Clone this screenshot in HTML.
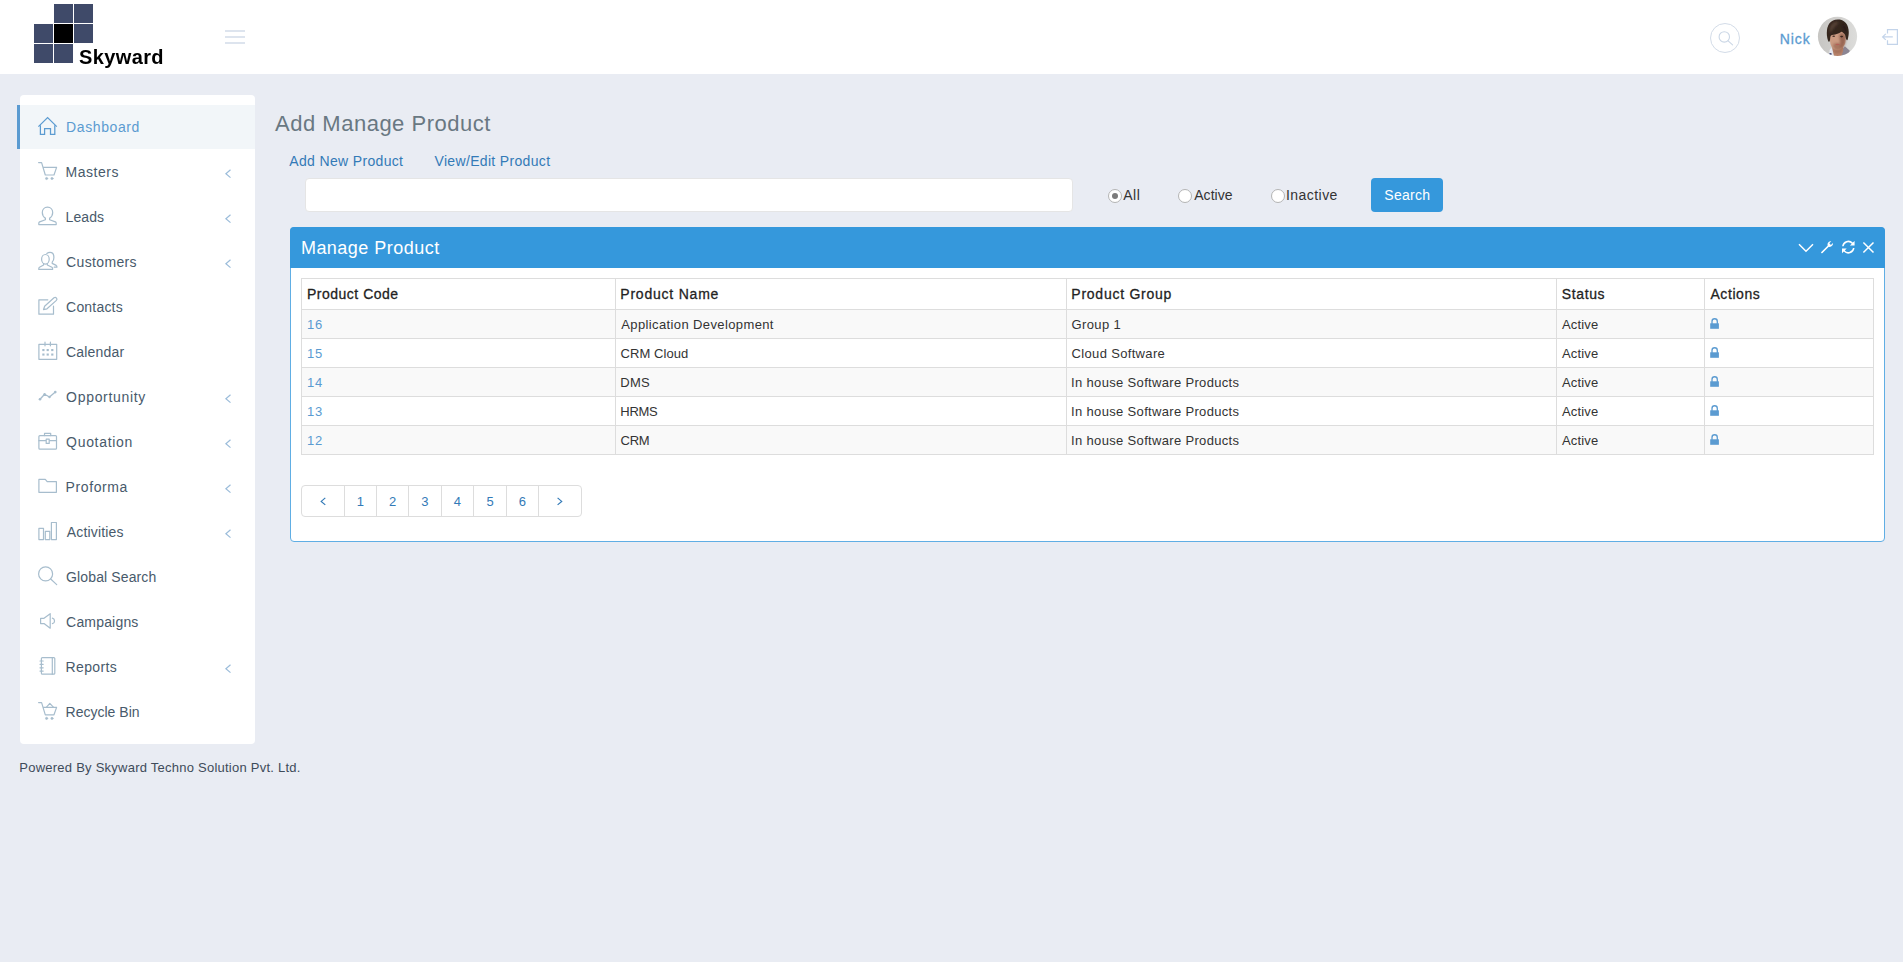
<!DOCTYPE html>
<html lang="en">
<head>
<meta charset="utf-8">
<title>Add Manage Product</title>
<style>
*{box-sizing:border-box;margin:0;padding:0}
html,body{width:1903px;height:962px;overflow:hidden}
body{background:#e9ecf3;font-family:"Liberation Sans","DejaVu Sans",sans-serif;font-size:14px;color:#333;position:relative}
a{text-decoration:none}
.tx{position:absolute;white-space:nowrap;line-height:20px;font-size:14px}
#hdr{position:absolute;left:0;top:0;width:1903px;height:74px;background:#fff}
.sq{position:absolute;width:19px;height:19px;background:#3f4a69}
#brand{font:bold 20px/24px "Liberation Sans",sans-serif;color:#000;filter:grayscale(1)}
.hb{position:absolute;left:225px;width:20px;height:2px;background:#dde4ee}
#srch{position:absolute;left:1710px;top:23px;width:30px;height:30px;border:1px solid #d3dce8;border-radius:50%}
#nick{color:#5b9bd1;-webkit-text-stroke:0.3px #5b9bd1}
#side{position:absolute;left:20px;top:95px;width:235px;height:649px;background:#fff;border-radius:4px}
#act{position:absolute;left:17px;top:105px;width:238px;height:44px;background:#f2f6f9;border-left:3px solid #5b9bd1}
.mt{color:#485a6b}
#foot{font-size:13px;line-height:18px;color:#3e4b5a}
#title{font-size:22px;line-height:32px;color:#697882}
.lnk{color:#337ab7}
#inp{position:absolute;left:305px;top:178px;width:768px;height:34px;background:#fff;border:1px solid #e5e5e5;border-radius:4px}
.rd{position:absolute;top:188.5px;width:14px;height:14px;border-radius:50%;background:#fff;border:1px solid #b4b4b4}
.rd i{position:absolute;left:3px;top:3px;width:6px;height:6px;border-radius:50%;background:#7b7b7b}
.rl{color:#333}
#btn{position:absolute;left:1371px;top:178px;width:72px;height:34px;background:#3598dc;border-radius:4px}
#btnt{color:#fff}
#pnl{position:absolute;left:290px;top:227px;width:1595px;height:315px;background:#fff;border:1px solid #60aee4;border-radius:4px}
#ph{position:absolute;left:290px;top:227px;width:1595px;height:41px;background:#3598dc;border-radius:4px 4px 0 0}
#cap{font-size:18px;line-height:25px;color:#fff}
#grid{position:absolute;left:301px;top:278px;width:1573px;height:177px;background:#fff}
.row{position:absolute;left:301px;width:1573px;height:29px;background:#f9f9f9}
.hl{position:absolute;left:301px;width:1573px;height:1px;background:#ddd}
.vl{position:absolute;top:278px;width:1px;height:177px;background:#ddd}
.th{font-weight:normal;color:#222;-webkit-text-stroke:0.28px #222}
.td{font-size:13px;line-height:18px;color:#333}
.tl{font-size:13px;line-height:18px;color:#5b9bd1}
#pg{position:absolute;left:301px;top:485px;width:281px;height:32px;border:1px solid #ddd;border-radius:4px;background:#fff}
.pv{position:absolute;top:486px;width:1px;height:30px;background:#ddd}
.pn{font-size:13px;line-height:18px;color:#337ab7}
svg{position:absolute;left:0;top:0;overflow:visible}
</style>
</head>
<body>
<div id="hdr">
<div class="sq" style="left:54px;top:4px;"></div>
<div class="sq" style="left:74px;top:4px;"></div>
<div class="sq" style="left:34px;top:24px;"></div>
<div class="sq" style="left:54px;top:24px;background:#000"></div>
<div class="sq" style="left:74px;top:24px;"></div>
<div class="sq" style="left:34px;top:44px;"></div>
<div class="sq" style="left:54px;top:44px;"></div>
<div id="brand" class="tx" style="left:79.5px;top:45px;letter-spacing:0.36px;margin-left:-0.4px;">Skyward</div>
<div class="hb" style="top:30px"></div>
<div class="hb" style="top:36px"></div>
<div class="hb" style="top:42px"></div>
<div id="srch"></div>
<div id="nick" class="tx" style="left:1780px;top:29px;letter-spacing:0.92px;margin-left:-0.2px;">Nick</div>
</div>
<div id="side"></div><div id="act"></div>
<span class="tx mt" id="m0" style="left:66.5px;top:117px;color:#5b9bd1;letter-spacing:0.59px;margin-left:-0.4px;">Dashboard</span>
<span class="tx mt" id="m1" style="left:66px;top:162px;letter-spacing:0.52px;margin-left:-0.4px;">Masters</span>
<span class="tx mt" id="m2" style="left:66px;top:207px;letter-spacing:0.08px;margin-left:-0.4px;">Leads</span>
<span class="tx mt" id="m3" style="left:66px;top:252px;letter-spacing:0.35px;margin-left:0.1px;">Customers</span>
<span class="tx mt" id="m4" style="left:66px;top:297px;letter-spacing:0.19px;margin-left:0.1px;">Contacts</span>
<span class="tx mt" id="m5" style="left:66px;top:342px;letter-spacing:0.17px;margin-left:0.1px;">Calendar</span>
<span class="tx mt" id="m6" style="left:66px;top:387px;letter-spacing:0.69px;margin-left:0.1px;">Opportunity</span>
<span class="tx mt" id="m7" style="left:66px;top:432px;letter-spacing:0.68px;margin-left:0.1px;">Quotation</span>
<span class="tx mt" id="m8" style="left:66px;top:477px;letter-spacing:0.59px;margin-left:-0.4px;">Proforma</span>
<span class="tx mt" id="m9" style="left:66px;top:522px;letter-spacing:0.16px;margin-left:0.8px;">Activities</span>
<span class="tx mt" id="m10" style="left:66px;top:567px;letter-spacing:0.12px;margin-left:0.1px;">Global Search</span>
<span class="tx mt" id="m11" style="left:66px;top:612px;letter-spacing:0.18px;margin-left:0.1px;">Campaigns</span>
<span class="tx mt" id="m12" style="left:66px;top:657px;letter-spacing:0.34px;margin-left:-0.4px;">Reports</span>
<span class="tx mt" id="m13" style="left:66px;top:702px;letter-spacing:0.00px;margin-left:-0.4px;">Recycle Bin</span>
<div id="foot" class="tx" style="left:20px;top:759px;letter-spacing:0.24px;margin-left:-0.7px;">Powered By Skyward Techno Solution Pvt. Ltd.</div>
<div id="title" class="tx" style="left:274px;top:108px;letter-spacing:0.50px;margin-left:1.1px;">Add Manage Product</div>
<a class="tx lnk" id="l1" style="left:289px;top:151px;letter-spacing:0.34px;margin-left:0.3px;">Add New Product</a>
<a class="tx lnk" id="l2" style="left:434px;top:151px;letter-spacing:0.33px;margin-left:0.5px;">View/Edit Product</a>
<div id="inp"></div>
<div class="rd" style="left:1107.8px"><i></i></div><div class="rd" style="left:1177.8px"></div><div class="rd" style="left:1270.8px"></div>
<span class="tx rl" id="r1" style="left:1123px;top:185px;letter-spacing:0.58px;margin-left:0.2px;">All</span>
<span class="tx rl" id="r2" style="left:1193.5px;top:185px;letter-spacing:0.06px;margin-left:0.7px;">Active</span>
<span class="tx rl" id="r3" style="left:1286.5px;top:185px;letter-spacing:0.46px;margin-left:-0.6px;">Inactive</span>
<div id="btn"></div><span class="tx" id="btnt" style="left:1384.5px;top:185px;letter-spacing:0.25px;margin-left:-0.2px;">Search</span>
<div id="pnl"></div><div id="ph"></div>
<span class="tx" id="cap" style="left:301px;top:236px;letter-spacing:0.48px;margin-left:-0.1px;">Manage Product</span>
<div id="grid"></div>
<div class="row" style="top:310px"></div>
<div class="row" style="top:368px"></div>
<div class="row" style="top:426px"></div>
<div class="hl" style="top:278px"></div>
<div class="hl" style="top:309px"></div>
<div class="hl" style="top:338px"></div>
<div class="hl" style="top:367px"></div>
<div class="hl" style="top:396px"></div>
<div class="hl" style="top:425px"></div>
<div class="hl" style="top:454px"></div>
<div class="vl" style="left:301px"></div>
<div class="vl" style="left:615px"></div>
<div class="vl" style="left:1066px"></div>
<div class="vl" style="left:1556px"></div>
<div class="vl" style="left:1704px"></div>
<div class="vl" style="left:1873px"></div>
<span class="tx th" id="h0" style="left:307px;top:284px;letter-spacing:0.50px;margin-left:0.0px;">Product Code</span>
<span class="tx th" id="h1" style="left:621px;top:284px;letter-spacing:0.78px;margin-left:-0.7px;">Product Name</span>
<span class="tx th" id="h2" style="left:1072px;top:284px;letter-spacing:0.75px;margin-left:-0.7px;">Product Group</span>
<span class="tx th" id="h3" style="left:1562px;top:284px;letter-spacing:0.64px;margin-left:-0.3px;">Status</span>
<span class="tx th" id="h4" style="left:1710px;top:284px;letter-spacing:0.59px;margin-left:0.4px;">Actions</span>
<a class="tx tl" id="c00" style="left:307px;top:316px;letter-spacing:0.60px;margin-left:0.1px;">16</a>
<span class="tx td" id="c01" style="left:621px;top:316px;letter-spacing:0.38px;margin-left:0.3px;">Application Development</span>
<span class="tx td" id="c02" style="left:1072px;top:316px;letter-spacing:0.35px;margin-left:-0.4px;">Group 1</span>
<span class="tx td" id="c03" style="left:1562px;top:316px;letter-spacing:0.19px;margin-left:-0.1px;">Active</span>
<a class="tx tl" id="c10" style="left:307px;top:345px;letter-spacing:0.60px;margin-left:0.1px;">15</a>
<span class="tx td" id="c11" style="left:621px;top:345px;letter-spacing:0.05px;margin-left:-0.4px;">CRM Cloud</span>
<span class="tx td" id="c12" style="left:1072px;top:345px;letter-spacing:0.33px;margin-left:-0.4px;">Cloud Software</span>
<span class="tx td" id="c13" style="left:1562px;top:345px;letter-spacing:0.19px;margin-left:-0.1px;">Active</span>
<a class="tx tl" id="c20" style="left:307px;top:374px;letter-spacing:0.60px;margin-left:0.1px;">14</a>
<span class="tx td" id="c21" style="left:621px;top:374px;letter-spacing:0.25px;margin-left:-0.7px;">DMS</span>
<span class="tx td" id="c22" style="left:1072px;top:374px;letter-spacing:0.33px;margin-left:-0.9px;">In house Software Products</span>
<span class="tx td" id="c23" style="left:1562px;top:374px;letter-spacing:0.19px;margin-left:-0.1px;">Active</span>
<a class="tx tl" id="c30" style="left:307px;top:403px;letter-spacing:0.60px;margin-left:0.1px;">13</a>
<span class="tx td" id="c31" style="left:621px;top:403px;letter-spacing:-0.27px;margin-left:-0.7px;">HRMS</span>
<span class="tx td" id="c32" style="left:1072px;top:403px;letter-spacing:0.33px;margin-left:-0.9px;">In house Software Products</span>
<span class="tx td" id="c33" style="left:1562px;top:403px;letter-spacing:0.19px;margin-left:-0.1px;">Active</span>
<a class="tx tl" id="c40" style="left:307px;top:432px;letter-spacing:0.60px;margin-left:0.1px;">12</a>
<span class="tx td" id="c41" style="left:621px;top:432px;letter-spacing:-0.32px;margin-left:-0.4px;">CRM</span>
<span class="tx td" id="c42" style="left:1072px;top:432px;letter-spacing:0.33px;margin-left:-0.9px;">In house Software Products</span>
<span class="tx td" id="c43" style="left:1562px;top:432px;letter-spacing:0.19px;margin-left:-0.1px;">Active</span>
<div id="pg"></div>
<div class="pv" style="left:344px"></div>
<div class="pv" style="left:376px"></div>
<div class="pv" style="left:408px"></div>
<div class="pv" style="left:441px"></div>
<div class="pv" style="left:473px"></div>
<div class="pv" style="left:506px"></div>
<div class="pv" style="left:538px"></div>
<span class="tx pn" style="left:350.3px;top:493px;width:20px;text-align:center">1</span>
<span class="tx pn" style="left:382.6px;top:493px;width:20px;text-align:center">2</span>
<span class="tx pn" style="left:414.9px;top:493px;width:20px;text-align:center">3</span>
<span class="tx pn" style="left:447.4px;top:493px;width:20px;text-align:center">4</span>
<span class="tx pn" style="left:480px;top:493px;width:20px;text-align:center">5</span>
<span class="tx pn" style="left:512.4px;top:493px;width:20px;text-align:center">6</span>
<svg width="1903" height="962" viewBox="0 0 1903 962" fill="none" stroke-linecap="round" stroke-linejoin="round">
<!-- header: search, logout -->
<g stroke="#cbd7e6" stroke-width="1.1">
<circle cx="1724.3" cy="36.9" r="5.2"/><path d="M1728.1 40.8 L1732.6 44.8"/>
</g>
<g stroke="#c3d4ea" stroke-width="1.2" stroke-linecap="butt" stroke-linejoin="miter">
<path d="M1887.5 33.5 V29.6 H1897.4 V44.4 H1887.5 V40.3"/>
<path d="M1882.6 36.9 H1892.8 M1885.8 33.9 L1882.6 36.9 L1885.8 39.9"/>
</g>
<!-- avatar -->
<defs><clipPath id="av"><circle cx="1837.5" cy="36.450" r="19.600"/></clipPath>
<linearGradient id="avb" x1="0" y1="0" x2="1" y2="0"><stop offset="0" stop-color="#c6c5c2"/><stop offset=".5" stop-color="#d1d0ce"/><stop offset="1" stop-color="#dddddb"/></linearGradient>
<filter id="bl" x="-20%" y="-20%" width="140%" height="140%"><feGaussianBlur stdDeviation="0.600"/></filter>
<filter id="bl2" x="-30%" y="-30%" width="160%" height="160%"><feGaussianBlur stdDeviation="1"/></filter></defs>
<g clip-path="url(#av)" stroke="none">
<rect x="1817" y="16" width="41" height="41" fill="url(#avb)"/>
<g filter="url(#bl)">
<path d="M1843.1 48.6 1844.9 46.3 1849.8 50.7 1848.7 54.7 1841.2 56.6 1842.1 51.4 Z" fill="#8c8693"/>
<path d="M1828.6 56.6 1829.7 50.0 1831.4 47.4 1833.0 51.4 1834.2 56.6 Z" fill="#e6e8f0"/>
<path d="M1829.4 53.1 1831.5 53.1 1831.5 54.9 1829.4 54.9 Z" fill="#3d4270"/>
<path d="M1832.1 46.7 1843.3 46.7 1843.0 51.4 1841.2 56.6 1834.2 56.6 1833.0 51.4 Z" fill="#b7826a"/>
<path d="M1829.9 35.7 Q1830.0 29.4 1833.7 27.8 Q1837.5 26.2 1841.5 27.8 Q1845.6 29.4 1845.7 35.7 Q1845.8 42.1 1844.7 44.4 Q1843.5 46.7 1841.9 48.3 Q1840.3 49.8 1838.9 50.1 Q1837.5 50.5 1836.0 50.1 Q1834.6 49.8 1833.0 48.3 Q1831.4 46.7 1830.6 44.4 Q1829.9 42.1 1829.9 35.7 Z" fill="#cc9b82"/>
<path d="M1839.3 35.0 Q1839.8 32.7 1842.7 33.4 Q1845.6 34.1 1845.8 38.1 Q1845.9 42.1 1844.7 44.5 Q1843.5 47.0 1841.4 48.3 Q1839.3 49.5 1840.0 46.3 Q1840.7 43.0 1839.8 40.2 Q1838.9 37.4 1839.3 35.0 Z" fill="#7a4a3a" opacity=".62" filter="url(#bl2)"/>
<path d="M1833.0 46.3 Q1832.5 43.9 1835.0 43.3 Q1837.5 42.8 1840.3 43.3 Q1843.1 43.9 1842.7 46.2 Q1842.4 48.4 1839.9 49.5 Q1837.5 50.7 1835.5 49.7 Q1833.5 48.6 1833.0 46.3 Z" fill="#9a6852" opacity=".7" filter="url(#bl2)"/>
<path d="M1833.7 51.4 Q1832.8 49.5 1835.1 50.5 Q1837.5 51.4 1840.0 50.2 Q1842.6 49.1 1841.9 51.0 Q1841.2 52.8 1837.9 53.1 Q1834.6 53.3 1833.7 51.4 Z" fill="#8d5b47" opacity=".55" filter="url(#bl2)"/>
<ellipse cx="1837.5" cy="44.5" rx="2.100" ry=".7" fill="#b65a55" opacity=".8"/>
<ellipse cx="1833.7" cy="36.2" rx="1.400" ry=".75" fill="#49312a"/>
<ellipse cx="1841.6" cy="36.6" rx="1.500" ry=".8" fill="#38251f"/>
<path d="M1829.5 41.4 Q1828.7 42.5 1827.9 40.2 Q1827.1 37.9 1826.9 35.3 Q1826.7 32.7 1827.0 30.1 Q1827.3 27.6 1828.3 25.3 Q1829.3 23.1 1831.1 21.7 Q1833.0 20.3 1835.2 19.8 Q1837.5 19.2 1839.9 19.6 Q1842.4 20.0 1844.2 21.4 Q1846.1 22.8 1847.2 24.9 Q1848.2 27.1 1848.5 29.4 Q1848.9 31.8 1848.7 34.1 Q1848.5 36.5 1847.9 38.7 Q1847.4 40.9 1846.7 40.1 Q1846.0 39.3 1845.6 37.2 Q1845.3 35.0 1844.5 34.1 Q1843.8 33.2 1842.8 32.4 Q1841.9 31.5 1841.1 32.0 Q1840.3 32.5 1839.3 33.1 Q1838.4 33.6 1836.7 34.1 Q1835.1 34.6 1833.5 34.7 Q1831.8 34.8 1831.0 35.6 Q1830.2 36.5 1830.2 38.3 Q1830.2 40.2 1829.5 41.4 Z" fill="#35271f"/>
<path d="M1829.7 31.5 Q1829.0 29.4 1830.0 26.9 Q1830.9 24.3 1833.0 22.9 Q1835.1 21.5 1837.2 21.7 Q1839.3 22.0 1837.5 24.1 Q1835.6 26.2 1833.9 28.0 Q1832.3 29.9 1831.4 31.8 Q1830.4 33.6 1829.7 31.5 Z" fill="#5e463b" opacity=".75" filter="url(#bl2)"/>
<path d="M1842.1 25.7 Q1841.2 23.4 1843.5 24.8 Q1845.9 26.2 1846.8 29.4 Q1847.7 32.7 1846.6 32.2 Q1845.4 31.8 1844.2 29.9 Q1843.1 28.0 1842.1 25.7 Z" fill="#231916" opacity=".6" filter="url(#bl2)"/>
</g>
</g>
<!-- sidebar icons -->
<g stroke="#5b9bd1" stroke-width="1.25" stroke-linecap="butt" stroke-linejoin="miter">
<path d="M38.4 126.6 L47.6 117.6 L56.8 126.600"/><path d="M40.4 125.2 V134.4 H44.600 V128.5 H50.5 V134.4 H54.8 V125.2"/>
</g>
<g stroke="#a7bdcd" stroke-width="1.2">
<!-- basket -->
<path d="M38.6 162.6 H41.6 L45.3 175 H54 L56.6 167.4 H43.2"/>
<circle cx="46.6" cy="178.5" r="1.100" fill="#a7bdcd" stroke-width=".7"/><circle cx="52" cy="178.5" r="1.100" fill="#a7bdcd" stroke-width=".7"/>
<!-- user -->
<path d="M45.400 218.300 C43.300 216.900 42.300 214.600 42.300 212.500 C42.300 209.800 44.100 207.200 47.500 207.200 C50.900 207.200 52.700 209.800 52.700 212.500 C52.700 214.600 51.700 216.900 49.600 218.300"/>
<path d="M45.400 218.300 V219.700 L39.600 221.900 Q38.800 222.300 38.800 223.300 V224.600 H56.200 V223.300 Q56.200 222.300 55.400 221.900 L49.600 219.700 V218.300"/>
<!-- users -->
<ellipse cx="45.4" cy="259.3" rx="3.8" ry="4.8"/>
<path d="M43.600 263.700 V265 L39.5 267.200 Q38.800 267.600 38.800 268.500 V269.400 H52.6 V268.500 Q52.6 267.600 51.900 267.200 L47.300 265 V263.700"/>
<path d="M46.800 253.400 Q48.200 252.400 50 252.400 Q53.900 252.400 53.900 257.400 Q53.900 260.400 52.200 262.200 V263.400 L56.200 265.400 Q56.900 265.800 56.900 266.700 V267.200 H54.2"/>
<!-- note -->
<path d="M47.800 299.800 H38.900 V314.200 H53.500 V306.200"/>
<path d="M43.500 309.700 L44.600 306.200 L54 297.800 Q55.400 296.900 56.500 298.100 Q57.500 299.300 56.400 300.400 L47 308.800 Z"/>
<!-- calendar -->
<rect x="38.900" y="344.300" width="17.800" height="15"/>
<path d="M45 342.200 V345.800 M50.400 342.200 V345.800"/>
<g fill="#a7bdcd" stroke="none"><rect x="42.300" y="349" width="2.200" height="2.100"/><rect x="46.600" y="349" width="2.200" height="2.100"/><rect x="51.200" y="349" width="2.200" height="2.100"/><rect x="42.300" y="353.500" width="2.200" height="2.100"/><rect x="46.600" y="353.500" width="2.200" height="2.100"/><rect x="51.200" y="353.500" width="2.200" height="2.100"/></g>
<!-- graph -->
<path d="M40 399.300 L44.600 394.200 L49.500 397 L55.300 392.100" stroke-width="1.3"/>
<g fill="#a7bdcd" stroke="none"><circle cx="40" cy="399.300" r="1.300"/><circle cx="44.600" cy="394.200" r="1.200"/><circle cx="49.500" cy="397" r="1.200"/><circle cx="55.300" cy="392.100" r="1.300"/></g>
<!-- briefcase -->
<rect x="38.900" y="435.600" width="17.600" height="13.600" rx="1"/>
<path d="M44.500 435.600 V433.400 H50.700 V435.600 M38.900 440.700 H56.500"/>
<rect x="46.200" y="439.200" width="3" height="4.200" fill="#fff"/>
<!-- folder -->
<path d="M38.900 479.400 H45.300 L47.200 481.700 H56.400 V492.300 H38.900 Z"/>
<!-- bar chart -->
<rect x="38.900" y="528.300" width="4.600" height="11.300"/><rect x="45.300" y="531.400" width="4.500" height="8.200"/><rect x="51.400" y="522.500" width="5" height="17.100"/>
<!-- magnifier -->
<circle cx="45.600" cy="573.900" r="7"/><path d="M50.700 579 L56.700 584.600"/>
<!-- volume -->
<path d="M40.600 618.300 H44 L50.200 613.700 V628.200 L44 623.600 H40.600 Z"/><path d="M52.400 618.100 A2.900 2.900 0 0 1 52.400 623.700"/>
<!-- notebook -->
<rect x="41.400" y="657.600" width="13.400" height="16.600" rx="1"/><path d="M52.300 657.600 V674.200 M40 661 H43.200 M40 664.300 H43.200 M40 667.800 H43.200 M40 671.100 H43.200"/>
<!-- basket loaded -->
<path d="M38.600 702.600 H41.600 L45.300 714.800 H54 L56.600 707.400 H43.200"/><path d="M46.300 707.300 L49.800 703.400 L53.600 707.300"/>
<circle cx="46.600" cy="718.400" r="1.100" fill="#a7bdcd" stroke-width=".7"/><circle cx="52" cy="718.400" r="1.100" fill="#a7bdcd" stroke-width=".7"/>
</g>
<!-- sidebar arrows -->
<g stroke="#9bbcda" stroke-width="1.2" stroke-linecap="butt" stroke-linejoin="miter">
<path d="M230.500 169.8 L225.900 173.7 L230.500 177.6"/>
<path d="M230.500 214.8 L225.900 218.7 L230.500 222.6"/>
<path d="M230.500 259.8 L225.900 263.7 L230.500 267.6"/>
<path d="M230.500 394.8 L225.900 398.7 L230.500 402.6"/>
<path d="M230.500 439.8 L225.900 443.7 L230.500 447.6"/>
<path d="M230.500 484.8 L225.900 488.7 L230.500 492.6"/>
<path d="M230.500 529.8 L225.900 533.7 L230.500 537.6"/>
<path d="M230.500 664.8 L225.900 668.7 L230.500 672.6"/>
</g>
<!-- panel tools -->
<g stroke="#fff" stroke-width="1.5" stroke-linecap="butt" stroke-linejoin="miter">
<path d="M1799 244.300 L1806 251.200 L1813 244.300"/>
<path d="M1863.400 242.500 L1873.500 252.500 M1873.500 242.500 L1863.400 252.500"/>
</g>
<g fill="#fff" stroke="none">
<!-- wrench -->
<path d="M1821.300 252 L1827.600 245.700 Q1827 243.400 1828.600 241.900 Q1830 240.900 1831.300 241.300 L1829.300 243.300 L1830.900 244.900 L1832.900 242.900 Q1833.300 244.300 1832.300 245.600 Q1830.900 247.200 1828.800 246.800 L1822.500 253.100 Q1821.800 253.600 1821.300 253.100 Q1820.800 252.600 1821.300 252 Z"/>
<!-- refresh -->
<path d="M1842.100 246.200 A6.200 6.200 0 0 1 1852.800 242.600 L1854.600 240.900 V245.600 H1849.900 L1851.800 243.700 A4.800 4.800 0 0 0 1843.600 246.200 Z"/>
<path d="M1854.500 248 A6.200 6.200 0 0 1 1843.800 251.600 L1842 253.300 V248.600 H1846.700 L1844.800 250.500 A4.800 4.800 0 0 0 1853 248 Z"/>
</g>
<!-- locks -->
<g fill="#5b9bd1" stroke="#5b9bd1">
<rect x="1710.200" y="323.3" width="8.700" height="5.500" stroke="none"/><path d="M1712 323.5 V321.4 A2.650 2.650 0 0 1 1717.300 321.4 V323.5" fill="none" stroke-width="1.3"/>
<rect x="1710.200" y="352.3" width="8.700" height="5.500" stroke="none"/><path d="M1712 352.5 V350.4 A2.650 2.650 0 0 1 1717.300 350.4 V352.5" fill="none" stroke-width="1.3"/>
<rect x="1710.200" y="381.3" width="8.700" height="5.500" stroke="none"/><path d="M1712 381.5 V379.4 A2.650 2.650 0 0 1 1717.300 379.4 V381.5" fill="none" stroke-width="1.3"/>
<rect x="1710.200" y="410.3" width="8.700" height="5.500" stroke="none"/><path d="M1712 410.5 V408.4 A2.650 2.650 0 0 1 1717.300 408.4 V410.5" fill="none" stroke-width="1.3"/>
<rect x="1710.200" y="439.3" width="8.700" height="5.500" stroke="none"/><path d="M1712 439.5 V437.4 A2.650 2.650 0 0 1 1717.300 437.4 V439.5" fill="none" stroke-width="1.3"/>
</g>
<!-- pagination arrows -->
<g stroke="#337ab7" stroke-width="1.2" stroke-linecap="butt" stroke-linejoin="miter">
<path d="M325.300 497.900 L321.200 501.400 L325.300 504.900"/><path d="M557.600 497.900 L561.700 501.400 L557.600 504.900"/>
</g>
</svg>

</body>
</html>
